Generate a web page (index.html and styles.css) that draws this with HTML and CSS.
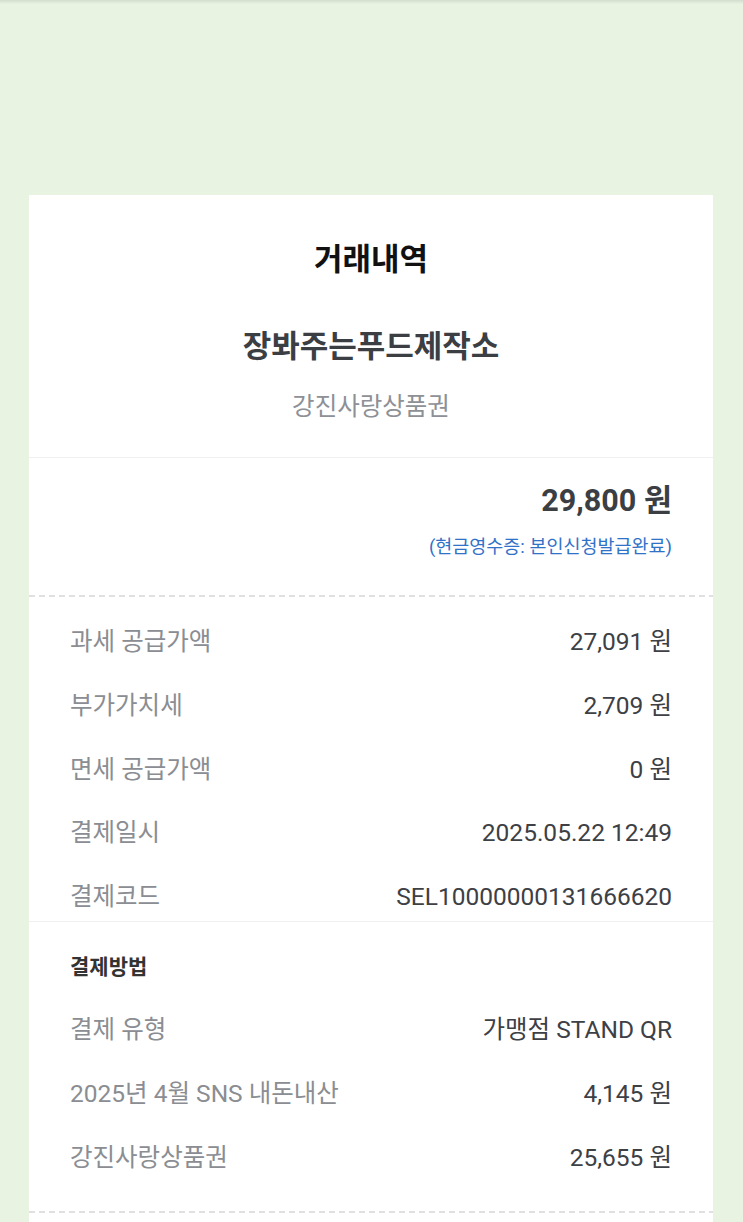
FILE: index.html
```html
<!DOCTYPE html>
<html lang="ko">
<head>
    <meta charset="UTF-8">
    <title>거래내역</title>
    <link rel="stylesheet" href="styles.css">
</head>
<body>
<div class="receipt">
    <div class="store-section">
        <h1 class="title">거래내역</h1>
        <h2 class="store-name">장봐주는푸드제작소</h2>
        <p class="store-sub">강진사랑상품권</p>
    </div>

    <div class="amount-section">
        <p class="amount">29,800 원</p>
        <p class="cash-receipt">(현금영수증: 본인신청발급완료)</p>
    </div>

    <div class="dashed"></div>

    <div class="rows detail-rows">
        <div class="row"><span class="label">과세 공급가액</span><span class="value">27,091 원</span></div>
        <div class="row"><span class="label">부가가치세</span><span class="value">2,709 원</span></div>
        <div class="row"><span class="label">면세 공급가액</span><span class="value">0 원</span></div>
        <div class="row"><span class="label">결제일시</span><span class="value">2025.05.22 12:49</span></div>
        <div class="row"><span class="label">결제코드</span><span class="value">SEL10000000131666620</span></div>
    </div>

    <div class="pay-section">
        <h3 class="section-title">결제방법</h3>
        <div class="rows">
            <div class="row"><span class="label">결제 유형</span><span class="value">가맹점 STAND QR</span></div>
            <div class="row"><span class="label">2025년 4월 SNS 내돈내산</span><span class="value">4,145 원</span></div>
            <div class="row"><span class="label">강진사랑상품권</span><span class="value">25,655 원</span></div>
        </div>
    </div>

    <div class="dashed"></div>
</div>
</body>
</html>
```

FILE: styles.css
```css
body {
    margin: 0;
    background: linear-gradient(#d3ddce, #e8f3e2 4px) #e8f3e2;
    font-family: Roboto, "Noto Sans CJK KR", sans-serif;
}
.receipt {
    background-color: white;
    margin: 195px 30px 0 29px;
    padding-bottom: 60px;
}
.store-section {
    text-align: center;
    padding: 45px 0 35px;
    border-bottom: 1px solid #f0f0f0;
}
.title {
    margin: 0;
    font-size: 31px;
    line-height: 40px;
    font-weight: 700;
    color: #111;
}
.store-name {
    margin: 47px 0 0;
    font-size: 31px;
    line-height: 40px;
    font-weight: 700;
    color: #3b3e43;
}
.store-sub {
    margin: 25px 0 0;
    font-size: 24.5px;
    line-height: 30px;
    color: #8d9095;
}
.amount-section {
    text-align: right;
    padding: 23px 41px 36px 0;
}
.amount {
    margin: 0;
    font-size: 30.5px;
    line-height: 40px;
    font-weight: 700;
    color: #3b3e43;
}
.cash-receipt {
    margin: 14px 0 0;
    font-size: 18.5px;
    line-height: 24px;
    color: #3172c9;
}
.dashed {
    height: 2px;
    background: repeating-linear-gradient(90deg, #e0e0e0 0 6px, transparent 6px 10px);
}
.rows {
    display: flex;
    flex-direction: column;
    gap: 33.75px;
}
.detail-rows {
    padding: 30px 41px 9px;
    border-bottom: 1px solid #f0f0f0;
}
.row {
    display: flex;
    justify-content: space-between;
    font-size: 24.5px;
    line-height: 30px;
}
.label {
    color: #8a8d92;
}
.value {
    color: #3d4045;
}
.pay-section {
    padding: 31px 41px 38px;
}
.section-title {
    margin: 0 0 34px;
    font-size: 21px;
    line-height: 28px;
    font-weight: 700;
    color: #333;
}
```
